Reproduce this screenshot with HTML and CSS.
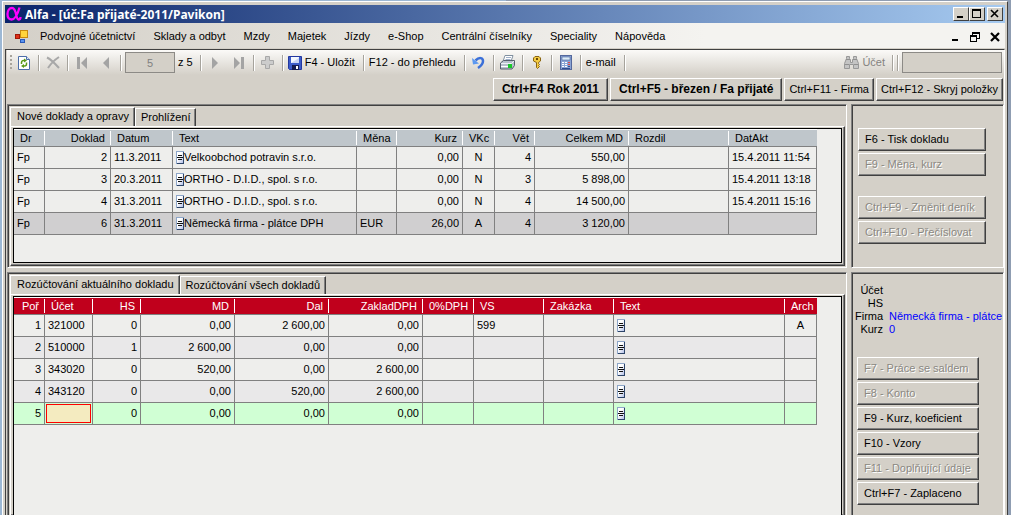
FILE: index.html
```html
<!DOCTYPE html>
<html lang="cs">
<head>
  <meta charset="UTF-8">
  <meta name="viewport" content="width=device-width, initial-scale=1.0">
  <title>Alfa - [úč:Fa přijaté-2011/Pavikon]</title>
  <link rel="stylesheet" href="styles.css">
</head>
<body>
  <svg width="0" height="0" class="defs">
    <linearGradient id="docFill" x1="0" y1="0" x2="1" y2="1">
      <stop offset="0.4" stop-color="#fff"/>
      <stop offset="1" stop-color="#b4c0e8"/>
    </linearGradient>
    <symbol id="doc" viewBox="0 0 8 13">
      <rect x="0" y="0" width="8" height="13" fill="#8ea6c8"/>
      <path d="M7 1h1v12H1v-1h6z" fill="#2c4468"/>
      <rect x="1" y="1" width="6" height="11" fill="url(#docFill)"/>
      <path d="M2 4h4v1H2zM1 6h6v1H1zM2 8h4v1H2z" fill="#111"/>
    </symbol>
  </svg>

  <div class="window">
    <header class="titlebar">
      <svg class="app-icon" width="16" height="16" viewBox="0 0 16 16">
        <path d="M13.500 1.500C12 7 9.500 13.500 5.500 13.500C2.500 13.500 1.500 11 1.500 8C1.500 4.500 3.500 2 6 2C11 2 9.500 13.500 12.500 13.500C13.500 13.500 14.500 13 14.500 11" fill="none" stroke="#ff00ff" stroke-width="2.300"/>
      </svg>
      <h1>Alfa - [úč:Fa přijaté-2011/Pavikon]</h1>
      <div class="caption-buttons">
        <button aria-label="Minimalizovat"><svg width="10" height="10"><path d="M1 7h6v2H1z"/></svg></button>
        <button aria-label="Maximalizovat"><svg width="10" height="10"><path d="M0 0h9v9H0zM1 2v6h7V2z" fill-rule="evenodd"/></svg></button>
        <button class="close" aria-label="Zavřít"><svg width="10" height="10"><path d="M1 1l7 7M8 1l-7 7" stroke="#000" stroke-width="1.600"/></svg></button>
      </div>
    </header>

    <nav class="menubar">
      <svg class="mdi-icon" width="14" height="14" viewBox="0 0 14 14">
        <rect x="5.500" y="0.500" width="7" height="7" fill="#ffd43c" stroke="#c88a10"/>
        <rect x="0.500" y="4.500" width="4" height="4" fill="#e03018" stroke="#a01808"/>
        <rect x="5.500" y="9.500" width="4" height="3" fill="#5a94f0" stroke="#2858b8"/>
      </svg>
      <button>Podvojné účetnictví</button>
      <button>Sklady a odbyt</button>
      <button>Mzdy</button>
      <button>Majetek</button>
      <button>Jízdy</button>
      <button>e-Shop</button>
      <button>Centrální číselníky</button>
      <button>Speciality</button>
      <button>Nápověda</button>
      <div class="mdi-buttons">
        <button aria-label="Minimalizovat okno"><svg width="10" height="10"><path d="M2 7h6v2H2z"/></svg></button>
        <button aria-label="Obnovit okno"><svg width="10" height="10"><path d="M2 0h8v7H7v3H0V3h2zM3 2v1h4v3h2V2zM1 5v4h5V5z" fill-rule="evenodd"/></svg></button>
        <button aria-label="Zavřít okno"><svg width="10" height="10"><path d="M1 1l8 8M9 1l-8 8" stroke="#000" stroke-width="2.200"/></svg></button>
      </div>
    </nav>

    <main class="client">
      <div class="toolbar">
        <span class="grip"></span>
        <button class="tool" aria-label="Obnovit">
          <svg width="12" height="14" viewBox="0 0 12 14">
            <path d="M0.500 0.500h8l3 3v10h-11z" fill="#fff" stroke="#4c6ea8"/>
            <path d="M8.500 0.500v3h3" fill="#dce6f6" stroke="#4c6ea8"/>
            <path d="M3.500 8V6.500a2 2 0 0 1 2-2h1M8.500 6.500V8a2 2 0 0 1-2 2h-1" fill="none" stroke="#5a9a18" stroke-width="1.500"/>
            <path d="M6 2.500l3 2-3 2zM6 8l-3 2 3 2z" fill="#5a9a18"/>
          </svg>
        </button>
        <span class="sep"></span>
        <button class="tool" aria-label="Smazat" disabled>
          <svg width="14" height="13" viewBox="0 0 14 13"><path d="M1 1.500c4 2 8 6 12 10.500M13 1C8.500 4 4.500 8 2 12" fill="none" stroke="#a8a8a8" stroke-width="2"/></svg>
        </button>
        <span class="sep"></span>
        <button class="tool" aria-label="První" disabled>
          <svg width="12" height="12" viewBox="0 0 12 12"><path d="M1 0h3v12H1zM11 0v12L5 6z" fill="#a4a4a4"/></svg>
        </button>
        <button class="tool" aria-label="Předchozí" disabled>
          <svg width="12" height="12" viewBox="0 0 12 12"><path d="M9 0v12L3 6z" fill="#a4a4a4"/></svg>
        </button>
        <span class="sep"></span>
        <input class="position" type="text" value="5" aria-label="Pozice" disabled>
        <span class="count">z 5</span>
        <span class="sep"></span>
        <button class="tool" aria-label="Další" disabled>
          <svg width="12" height="12" viewBox="0 0 12 12"><path d="M3 0v12l6-6z" fill="#a4a4a4"/></svg>
        </button>
        <button class="tool" aria-label="Poslední" disabled>
          <svg width="12" height="12" viewBox="0 0 12 12"><path d="M8 0h3v12H8zM1 0v12l6-6z" fill="#a4a4a4"/></svg>
        </button>
        <span class="sep"></span>
        <button class="tool" aria-label="Přidat" disabled>
          <svg width="13" height="13" viewBox="0 0 13 13"><path d="M4.500 0.500h4v4h4v4h-4v4h-4v-4h-4v-4h4z" fill="#ccc" stroke="#a8a8a8"/></svg>
        </button>
        <span class="sep"></span>
        <button class="tool text">
          <svg width="14" height="14" viewBox="0 0 14 14">
            <path d="M0.500 0.500h13v13h-12l-1-1z" fill="#3c5cc8" stroke="#2438a0"/>
            <rect x="3" y="1" width="8" height="6" fill="#f4f8ff"/>
            <path d="M3 7l8-5v5z" fill="#c8d4f4"/>
            <rect x="4" y="9" width="7" height="5" fill="#141c50"/>
            <rect x="8" y="10" width="2" height="3" fill="#fff"/>
          </svg>
          F4 - Uložit
        </button>
        <span class="sep"></span>
        <button class="tool text">F12 - do přehledu</button>
        <span class="sep"></span>
        <button class="tool" aria-label="Zpět">
          <svg width="13" height="13" viewBox="0 0 13 13">
            <path d="M3.500 4.500C7 1 11 1.500 11 5c0 3-2 5-5 7" fill="none" stroke="#3c70d8" stroke-width="2.500"/>
            <path d="M0 2l1 6.500 6-1z" fill="#5c98f0"/>
          </svg>
        </button>
        <span class="sep"></span>
        <button class="tool" aria-label="Tisk">
          <svg width="15" height="15" viewBox="0 0 15 15">
            <path d="M5 0.500h8l-2 6H3z" fill="#fff" stroke="#8090a0"/>
            <path d="M6 2.500h5M5.500 4.500h5" stroke="#a0b0c8"/>
            <path d="M0.500 8l3-2.500h11v5l-2.500 3.500H0.500z" fill="#b8c0cc" stroke="#56606c"/>
            <path d="M1 8.500h10.500l2.500-2.500" fill="none" stroke="#eef2f6"/>
            <path d="M1 11.500h7" stroke="#fff"/>
            <rect x="8" y="9" width="4" height="4" fill="#18c828"/>
          </svg>
        </button>
        <span class="sep"></span>
        <button class="tool" aria-label="Klíč">
          <svg width="8" height="13" viewBox="0 0 8 13">
            <path d="M2 0.500h4L7.500 2v3L5.500 6.500v1l1 1-1 1 1 1-2 2-1-1v-5L0.500 5V2z" fill="#f4cc44" stroke="#8a6410"/>
            <rect x="3" y="2" width="2" height="2" fill="#6a4a08"/>
          </svg>
        </button>
        <span class="sep"></span>
        <button class="tool" aria-label="Kalkulačka">
          <svg width="12" height="15" viewBox="0 0 12 15">
            <rect x="0.500" y="0.500" width="11" height="14" fill="#8ca4d4" stroke="#54689c"/>
            <rect x="2" y="2" width="8" height="3" fill="#dcecf8" stroke="#34508c" stroke-width="0.500"/>
            <path d="M2 7.500h2M5 7.500h2M2 9.500h2M5 9.500h2M2 11.500h2M5 11.500h2" stroke="#fff"/>
            <path d="M8 7.500h2M8 9.500h2" stroke="#e04848"/>
            <path d="M8 11.500h2M2 13.500h8" stroke="#304c90"/>
          </svg>
        </button>
        <span class="sep"></span>
        <button class="tool text">e-mail</button>
        <span class="sep"></span>
        <label class="find" for="account">
          <svg width="15" height="13" viewBox="0 0 15 13">
            <path d="M2.500 0.500h3v2l1 1v3h2v-3l1-1v-2h3v2l2 5v5h-5v-4h-4v4h-5v-5l2-5z" fill="#c4c4c4" stroke="#989898"/>
            <path d="M2 3.500h4M9 3.500h4M1 8.500h4M10 8.500h4" stroke="#909090"/>
          </svg>
          Účet
        </label>
        <span class="sep"></span>
        <span class="sep"></span>
        <input class="account" id="account" type="text" disabled>
      </div>

      <div class="shortcuts">
        <button class="btn strong">Ctrl+F4 Rok 2011</button>
        <button class="btn strong">Ctrl+F5 - březen / Fa přijaté</button>
        <button class="btn">Ctrl+F11 - Firma</button>
        <button class="btn">Ctrl+F12 - Skryj položky</button>
      </div>

      <div class="split">
        <section class="panel docs">
          <div class="tabs" role="tablist">
            <button class="tab selected" role="tab" aria-selected="true">Nové doklady a opravy</button>
            <button class="tab" role="tab" aria-selected="false">Prohlížení</button>
          </div>
          <div class="page">
            <div class="grid">
              <table class="blue">
                <colgroup>
                  <col class="w31"><col class="w66"><col class="w62"><col class="w184"><col class="w40"><col class="w66">
                  <col class="w32"><col class="w40"><col class="w94"><col class="w100"><col class="w88">
                </colgroup>
                <thead>
                  <tr><th>Dr</th><th class="num">Doklad</th><th>Datum</th><th>Text</th><th>Měna</th><th class="num">Kurz</th><th class="mid">VKc</th><th class="num">Vět</th><th class="num">Celkem MD</th><th>Rozdil</th><th>DatAkt</th></tr>
                </thead>
                <tbody>
                  <tr><td>Fp</td><td class="num">2</td><td>11.3.2011</td><td><svg class="doc"><use href="#doc"/></svg>Velkoobchod potravin s.r.o.</td><td></td><td class="num">0,00</td><td class="mid">N</td><td class="num">4</td><td class="num">550,00</td><td></td><td>15.4.2011 11:54</td></tr>
                  <tr><td>Fp</td><td class="num">3</td><td>20.3.2011</td><td><svg class="doc"><use href="#doc"/></svg>ORTHO - D.I.D., spol. s r.o.</td><td></td><td class="num">0,00</td><td class="mid">N</td><td class="num">3</td><td class="num">5 898,00</td><td></td><td>15.4.2011 13:18</td></tr>
                  <tr><td>Fp</td><td class="num">4</td><td>31.3.2011</td><td><svg class="doc"><use href="#doc"/></svg>ORTHO - D.I.D., spol. s r.o.</td><td></td><td class="num">0,00</td><td class="mid">N</td><td class="num">4</td><td class="num">14 500,00</td><td></td><td>15.4.2011 15:16</td></tr>
                  <tr class="current"><td>Fp</td><td class="num">6</td><td>31.3.2011</td><td><svg class="doc"><use href="#doc"/></svg>Německá firma - plátce DPH</td><td>EUR</td><td class="num">26,00</td><td class="mid">A</td><td class="num">4</td><td class="num">3 120,00</td><td></td><td></td></tr>
                </tbody>
              </table>
            </div>
          </div>
        </section>

        <aside class="panel side">
          <button class="btn">F6 - Tisk dokladu</button>
          <button class="btn" disabled>F9 - Měna, kurz</button>
          <div class="spacer"></div>
          <button class="btn" disabled>Ctrl+F9 - Změnit deník</button>
          <button class="btn" disabled>Ctrl+F10 - Přečíslovat</button>
        </aside>
      </div>

      <div class="split rest">
        <section class="panel">
          <div class="tabs" role="tablist">
            <button class="tab selected" role="tab" aria-selected="true">Rozúčtování aktuálního dokladu</button>
            <button class="tab" role="tab" aria-selected="false">Rozúčtování všech dokladů</button>
          </div>
          <div class="page">
            <div class="grid">
              <table class="red">
                <colgroup>
                  <col class="w31"><col class="w48"><col class="w48"><col class="w94"><col class="w94"><col class="w94">
                  <col class="w51"><col class="w70"><col class="w70"><col class="w171"><col class="w32">
                </colgroup>
                <thead>
                  <tr><th class="num">Poř</th><th>Účet</th><th class="num">HS</th><th class="num">MD</th><th class="num">Dal</th><th class="num">ZakladDPH</th><th>0%DPH</th><th>VS</th><th>Zakázka</th><th>Text</th><th>Arch</th></tr>
                </thead>
                <tbody>
                  <tr><td class="num">1</td><td>321000</td><td class="num">0</td><td class="num">0,00</td><td class="num">2 600,00</td><td class="num">0,00</td><td></td><td>599</td><td></td><td><svg class="doc"><use href="#doc"/></svg></td><td class="mid">A</td></tr>
                  <tr class="alt"><td class="num">2</td><td>510000</td><td class="num">1</td><td class="num">2 600,00</td><td class="num">0,00</td><td class="num">0,00</td><td></td><td></td><td></td><td><svg class="doc"><use href="#doc"/></svg></td><td></td></tr>
                  <tr><td class="num">3</td><td>343020</td><td class="num">0</td><td class="num">520,00</td><td class="num">0,00</td><td class="num">2 600,00</td><td></td><td></td><td></td><td><svg class="doc"><use href="#doc"/></svg></td><td></td></tr>
                  <tr class="alt"><td class="num">4</td><td>343120</td><td class="num">0</td><td class="num">0,00</td><td class="num">520,00</td><td class="num">2 600,00</td><td></td><td></td><td></td><td><svg class="doc"><use href="#doc"/></svg></td><td></td></tr>
                  <tr class="new"><td class="num">5</td><td class="edit"><input type="text" aria-label="Účet"></td><td class="num">0</td><td class="num">0,00</td><td class="num">0,00</td><td class="num">0,00</td><td></td><td></td><td></td><td><svg class="doc"><use href="#doc"/></svg></td><td></td></tr>
                </tbody>
              </table>
            </div>
          </div>
        </section>

        <aside class="panel side info">
          <dl>
            <dt>Účet</dt><dd></dd>
            <dt>HS</dt><dd></dd>
            <dt>Firma</dt><dd>Německá firma - plátce</dd>
            <dt>Kurz</dt><dd>0</dd>
          </dl>
          <button class="btn" disabled>F7 - Práce se saldem</button>
          <button class="btn" disabled>F8 - Konto</button>
          <button class="btn">F9 - Kurz, koeficient</button>
          <button class="btn">F10 - Vzory</button>
          <button class="btn" disabled>F11 - Doplňující údaje</button>
          <button class="btn">Ctrl+F7 - Zaplaceno</button>
        </aside>
      </div>
    </main>
  </div>
</body>
</html>
```
FILE: styles.css
```css
* {
  box-sizing: border-box;
}

body {
  margin: 0;
  height: 100vh;
  overflow: hidden;
  display: flex;
  padding: 1px 3px 0 2px;
  background: linear-gradient(90deg, #9db8d4 50%, #8f9db2 50%);
  font-family: "Liberation Sans", Arial, sans-serif;
  font-size: 11px;
  line-height: 13px;
  color: #000;
}

button,
input {
  font: inherit;
  color: inherit;
}

button {
  margin: 0;
  padding: 0;
  border: none;
  background: none;
  white-space: nowrap;
}

.defs {
  position: absolute;
}

.window {
  flex: 1;
  min-width: 0;
  display: flex;
  flex-direction: column;
  padding: 3px 2px 0;
  background: #d4d0c8;
  border: 1px solid #fff;
  border-right: 1px solid #404040;
  border-bottom: none;
}

/* title bar */
.titlebar {
  display: flex;
  align-items: center;
  height: 18px;
  padding: 0 2px 0 1px;
  background: linear-gradient(90deg, #0a246a, #a6caf0);
}

.titlebar h1 {
  flex: 1;
  margin: 0 0 0 3px;
  color: #fff;
  font-family: "Noto Sans", Tahoma, sans-serif;
  font-size: 12px;
  font-weight: bold;
}

.caption-buttons {
  display: flex;
}

.caption-buttons button {
  display: flex;
  align-items: center;
  justify-content: center;
  width: 16px;
  height: 14px;
  background: #d4d0c8;
  border: 1px solid;
  border-color: #fff #404040 #404040 #fff;
}

.caption-buttons .close {
  margin-left: 2px;
}

/* menu */
.menubar {
  display: flex;
  align-items: center;
  gap: 18px;
  height: 25px;
  padding: 2px 5px 0 10px;
  background: linear-gradient(90deg, #d4d0c8, #f4f3f0 70%);
}

.menubar .mdi-icon {
  margin-right: -7px;
}

.mdi-buttons {
  display: flex;
  gap: 10px;
  margin-left: auto;
}

.mdi-buttons svg {
  display: block;
}

/* work area */
.client {
  flex: 1;
  min-height: 0;
  display: flex;
  flex-direction: column;
  border: solid;
  border-width: 1px 1px 0;
  border-color: #404040 #fff #fff #404040;
  margin-top: 1px;
  padding: 0 0 0 1px;
}

.toolbar {
  display: flex;
  align-items: center;
  height: 25px;
  padding: 0 2px 0 3px;
  background: linear-gradient(#fbfaf8, #d4d0c8);
}

.grip {
  width: 2px;
  height: 16px;
  background: repeating-linear-gradient(#a8a49c 0 2px, transparent 2px 4px);
}

.tool {
  display: flex;
  align-items: center;
  justify-content: center;
  gap: 3px;
  width: 24px;
  height: 22px;
}

.tool.text {
  width: auto;
  padding: 0 6px 0 3px;
}

.sep {
  width: 2px;
  height: 16px;
  margin: 0 1px 0 2px;
  background: #a6a39c;
  border-right: 1px solid #fff;
}

.toolbar input {
  height: 21px;
  padding: 0;
  border: 1px solid #8c8a86;
  background: #d4d0c8;
  color: #808080;
  text-align: center;
}

.position {
  width: 50px;
  margin-left: 2px;
}

.account {
  width: 100px;
  margin-left: 2px;
}

.count {
  padding: 0 5px 0 3px;
}

.find {
  display: flex;
  align-items: center;
  gap: 3px;
  margin-left: auto;
  padding-right: 5px;
  color: #848280;
}

/* raised push buttons */
.btn {
  height: 23px;
  padding: 0 6px;
  text-align: left;
  background: #d4d0c8;
  border: 1px solid;
  border-color: #fff #404040 #404040 #fff;
  box-shadow: inset -1px -1px #808080;
}

.btn:disabled {
  color: #8a8882;
  text-shadow: 1px 1px #fff;
}

.shortcuts {
  display: flex;
  justify-content: flex-end;
  gap: 2px;
  padding: 3px 1px 3px 0;
}

.shortcuts .btn {
  padding: 0 4px;
}

.shortcuts .strong {
  padding: 0 8px;
  font-size: 12px;
  font-weight: bold;
}

/* panels */
.split {
  display: flex;
  gap: 4px;
}

.rest {
  flex: 1;
  min-height: 0;
  margin-top: 4px;
}

.panel {
  flex: 1;
  min-width: 0;
  display: flex;
  flex-direction: column;
  border: 1px solid;
  border-color: #808080 #fff #fff #808080;
  box-shadow: inset 1px 1px #404040;
  padding: 2px 1px 1px 2px;
}

.rest .panel {
  border-bottom: none;
  padding-bottom: 0;
}

.docs .grid {
  height: 135px;
}

.tabs {
  display: flex;
  align-items: flex-end;
  height: 19px;
}

.tab {
  height: 18px;
  padding: 0 5px;
  border: solid;
  border-width: 1px 1px 0;
  border-color: #fff #404040 #fff #fff;
  box-shadow: inset -1px 0 #808080;
}

.tab.selected {
  height: 19px;
  padding: 0 5px 2px 6px;
}

.page {
  flex: 1;
  min-height: 0;
  padding: 1px 2px 2px;
  border: 1px solid;
  border-color: #fff #404040 #404040 #fff;
  box-shadow: inset -1px -1px #808080;
}

.rest .page {
  padding-bottom: 0;
  border-bottom: none;
}

.grid {
  background: #eeeeec;
  border: 1px solid #000;
  overflow: hidden;
}

.rest .grid {
  height: 100%;
  border-bottom: none;
}

/* data grids */
table {
  width: 803px;
  table-layout: fixed;
  border-collapse: separate;
  border-spacing: 0;
  border-top: 1px solid #fff;
}

.w31 { width: 31px; }
.w32 { width: 32px; }
.w40 { width: 40px; }
.w48 { width: 48px; }
.w51 { width: 51px; }
.w62 { width: 62px; }
.w66 { width: 66px; }
.w70 { width: 70px; }
.w88 { width: 88px; }
.w94 { width: 94px; }
.w100 { width: 100px; }
.w171 { width: 171px; }
.w184 { width: 184px; }

th,
td {
  padding: 0 3px;
  text-align: left;
  white-space: nowrap;
  border-bottom: 1px solid #808080;
}

td {
  height: 22px;
  border-right: 1px solid #808080;
}

th {
  height: 17px;
  padding: 0 6px;
  font-weight: normal;
  background: linear-gradient(#fff, #fff) right 1px / 1px 14px no-repeat;
}

th:last-child {
  background: none;
}

.blue thead {
  background: #bfc6cb;
}

.red thead {
  background: #c0001c;
  color: #fff;
}

.num {
  text-align: right;
}

.mid {
  text-align: center;
}

.current td {
  background: #d0cfd0;
}

.alt td {
  background: #e9e8e9;
}

.new td {
  background: #d0ffd4;
}

.edit {
  padding: 1px;
}

.edit input {
  display: block;
  width: 45px;
  height: 19px;
  padding: 0 2px;
  border: 1px solid #f00;
  background: #f4ebc0;
}

.doc {
  width: 8px;
  height: 13px;
  vertical-align: -3px;
}

/* right column */
.side {
  flex: 0 0 153px;
  padding: 23px 17px 0 6px;
  gap: 2px;
  overflow: hidden;
}

.side .spacer {
  height: 16px;
}

.side.info {
  padding: 11px 0 0 5px;
}

.info .btn {
  width: 122px;
}

dl {
  display: grid;
  grid-template-columns: 28px 1fr;
  gap: 0 6px;
  margin: 0 0 19px -2px;
}

dt {
  height: 13px;
  text-align: right;
}

dd {
  margin: 0;
  color: #00f;
  white-space: nowrap;
}
```
